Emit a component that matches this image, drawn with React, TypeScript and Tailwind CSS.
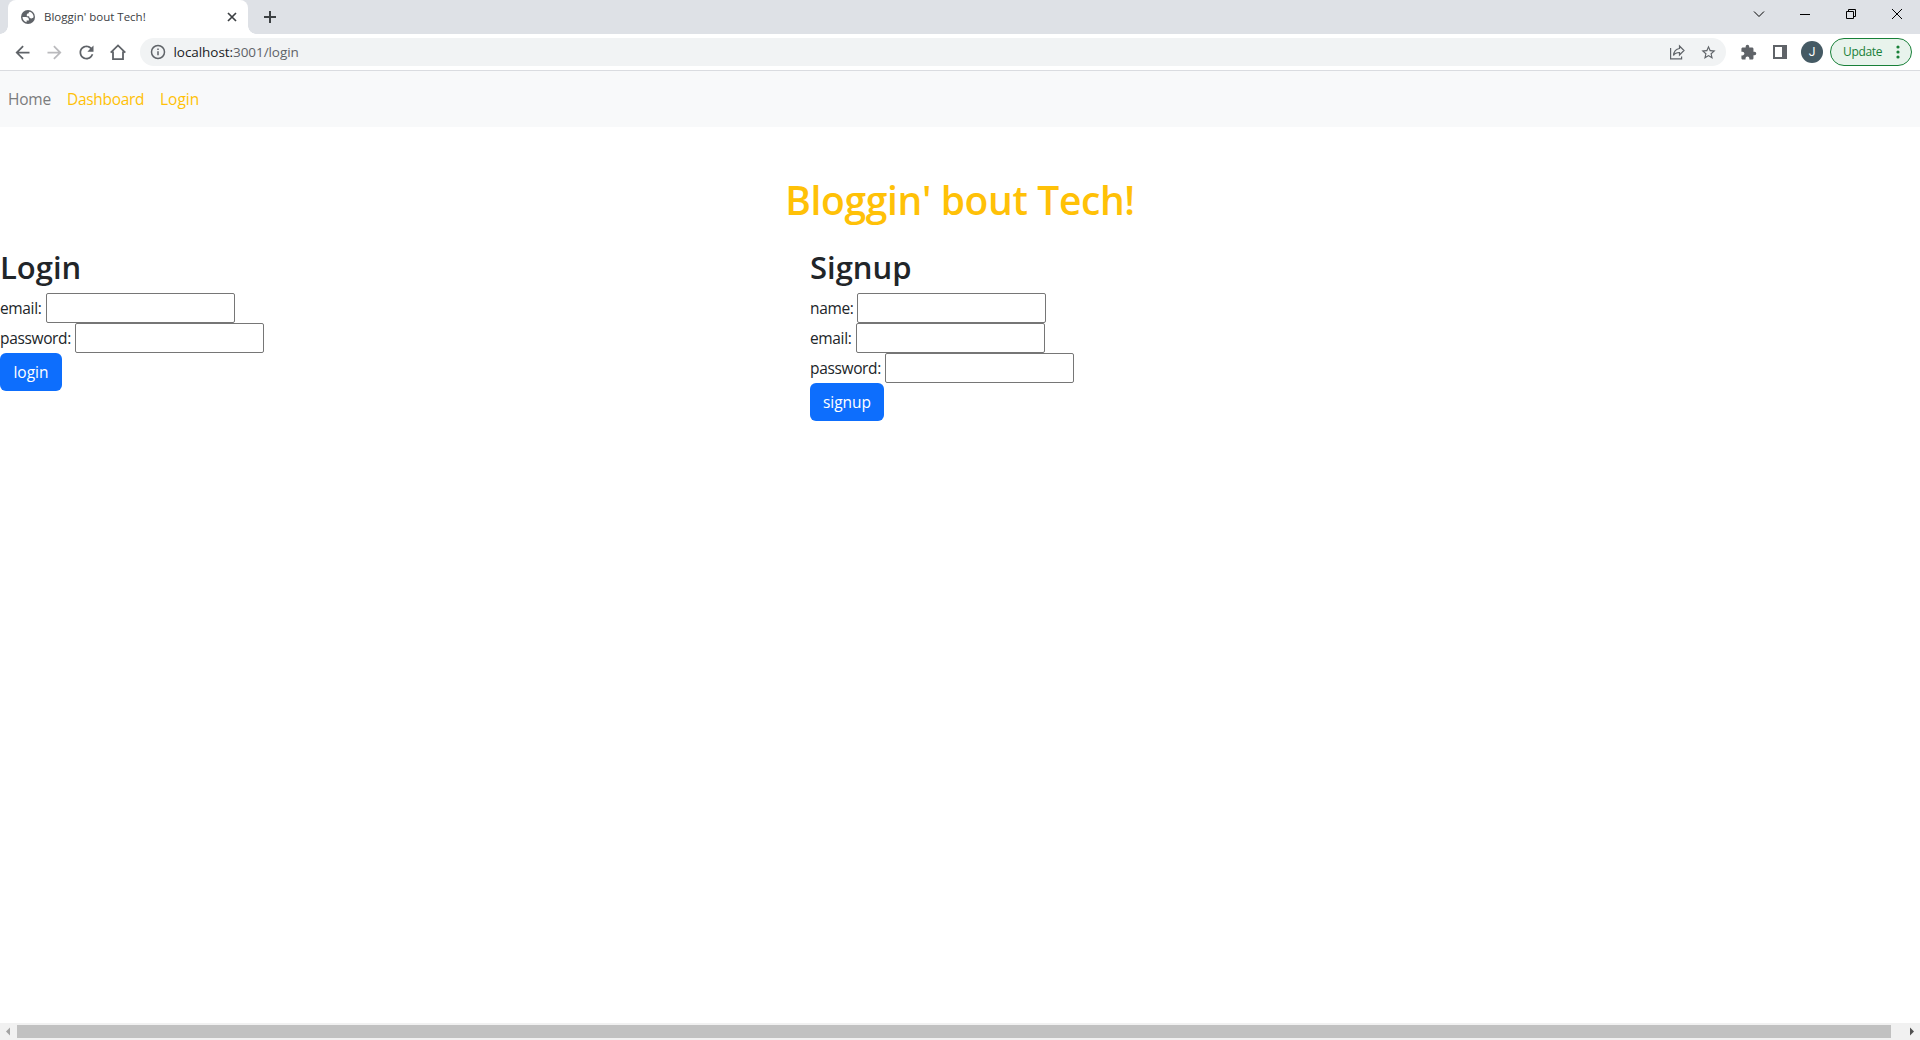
import React from "react";

const UI = "font-['Open_Sans','Noto_Sans',sans-serif]";

function Material({ d, className }: { d: string; className: string }) {
  return (
    <svg viewBox="0 0 24 24" fill="currentColor" className={`shrink-0 ${className}`}>
      <path d={d} />
    </svg>
  );
}

function Globe() {
  return (
    <svg viewBox="0 0 14 14" className="ml-[13px] size-[14px] shrink-0">
      <circle cx="7" cy="7" r="7" fill="#5f6368" />
      <path
        d="M1.500 7h3.300c2.300 0 3.400 1.100 3.100 3.500H5.600v1.700C3.100 11.600 1.500 9.500 1.500 7zM8.800 1.700c2.300.800 3.800 2.900 3.800 5.300-.500 1-1.400 1.400-2.300 1.400-1.400 0-2.200-.700-2.200-2.100H5.800V4.600c0-.800.600-1.200 1.700-1.200 0-.800.500-1.400 1.300-1.700z"
        fill="#fff"
      />
    </svg>
  );
}

function TabStrip() {
  return (
    <div className="flex h-[34px] bg-[#dee1e6]">
      <div className="relative ml-2 flex w-[240px] items-center rounded-t-lg bg-white">
        <span className="absolute -left-2 bottom-0 size-2 bg-[radial-gradient(circle_at_0_0,#dee1e6_7.5px,#fff_8px)]" />
        <span className="absolute -right-2 bottom-0 size-2 bg-[radial-gradient(circle_at_100%_0,#dee1e6_7.5px,#fff_8px)]" />
        <Globe />
        <span className="ml-[9px] w-[110px] whitespace-nowrap text-[11.500px] leading-4 text-[#3c4043]">
          Bloggin' bout Tech!
        </span>
        <svg viewBox="0 0 10 10" className="ml-[73px] size-[10px] text-[#3c4043]" fill="none" stroke="currentColor" strokeWidth="1.7">
          <path d="M1 1l8 8M9 1L1 9" />
        </svg>
      </div>
      <svg viewBox="0 0 12 12" className="ml-4 mt-[11px] size-3 text-[#3c4043]" fill="none" stroke="currentColor" strokeWidth="2">
        <path d="M6 0v12M0 6h12" />
      </svg>
      <div className="ml-auto mt-[7px] flex h-[14px] items-center gap-[32px] pr-4 text-black">
        <svg viewBox="0 0 14 14" className="size-[14px]" fill="none" stroke="currentColor" strokeWidth="1">
          <path d="M2 4.500L7 9.500l5-5" />
        </svg>
        <svg viewBox="0 0 14 14" className="size-[14px]" fill="none" stroke="currentColor" strokeWidth="1">
          <path d="M2 7.500h10" />
        </svg>
        <svg viewBox="0 0 14 14" className="size-[14px]" fill="none" stroke="currentColor" strokeWidth="1">
          <path d="M2.500 4.500h7v7h-7zM4.500 4V2.500h7v7H10" />
        </svg>
        <svg viewBox="0 0 14 14" className="size-[14px]" fill="none" stroke="currentColor" strokeWidth="1">
          <path d="M2 2l10 10M12 2L2 12" />
        </svg>
      </div>
    </div>
  );
}

function Toolbar() {
  return (
    <div className="flex h-[37px] items-center border-b border-[#dadce0] bg-white pl-[11.500px] pr-2 text-[#5f6368]">
      <Material className="size-[21px]" d="M20 11H7.830l5.590-5.590L12 4l-8 8 8 8 1.410-1.410L7.830 13H20v-2z" />
      <Material className="ml-[11px] size-[21px] text-[#bababd]" d="M12 4l-1.410 1.410L16.170 11H4v2h12.170l-5.580 5.590L12 20l8-8z" />
      <Material
        className="ml-[11px] size-[21px]"
        d="M17.650 6.350C16.200 4.900 14.210 4 12 4c-4.420 0-7.990 3.580-7.990 8s3.570 8 7.990 8c3.730 0 6.840-2.550 7.730-6h-2.080c-.820 2.330-3.040 4-5.650 4-3.310 0-6-2.690-6-6s2.690-6 6-6c1.660 0 3.140.690 4.220 1.780L13 11h7V4l-2.350 2.350z"
      />
      <svg viewBox="0 0 16 16" className="ml-[13.500px] size-4 shrink-0" fill="none" stroke="currentColor" strokeWidth="1.800">
        <path d="M.700 8.700L8 1.400l7.300 7.300M3 7.500v7.600h10V7.500" />
      </svg>
      <div className="ml-[13.500px] flex h-7 flex-1 items-center rounded-full bg-[#f1f3f4] pl-[10px] pr-[9px]">
        <svg viewBox="0 0 16 16" className="size-4" fill="none" stroke="currentColor" strokeWidth="1.500">
          <circle cx="8" cy="8" r="6.500" />
          <path d="M8 7.200v4M8 4.500v1.500" />
        </svg>
        <span className="ml-2 whitespace-nowrap text-[13.500px] leading-5 tracking-[-0.060px] text-[#202124]">
          localhost:<span className="text-[#5f6368]">3001/login</span>
        </span>
        <svg viewBox="0 0 16 16" className="ml-auto size-4" fill="none" stroke="currentColor" strokeWidth="1.200">
          <path d="M1.600 4v10.900h11v-2.400M10.500 2l4.500 4.500-4.500 4.500V8.500C7.500 8.500 5.700 9.400 4.500 11.500 4.800 8 6.800 5 10.500 4.500z" />
        </svg>
        <Material
          className="ml-[15px] size-[17px]"
          d="M22 9.240l-7.190-.620L12 2 9.190 8.630 2 9.240l5.460 4.730L5.820 21 12 17.270 18.180 21l-1.630-7.030L22 9.240zM12 15.400l-3.760 2.270 1-4.280-3.320-2.880 4.380-.380L12 6.100l1.710 4.040 4.380.380-3.320 2.880 1 4.280L12 15.400z"
        />
      </div>
      <Material
        className="ml-[14px] size-[17px]"
        d="M20.500 11H19V7c0-1.100-.900-2-2-2h-4V3.500a2.500 2.500 0 0 0-5 0V5H4c-1.100 0-1.990.900-1.990 2v3.800H3.500c1.490 0 2.700 1.210 2.700 2.700s-1.210 2.700-2.700 2.700H2V20c0 1.100.900 2 2 2h3.800v-1.500c0-1.490 1.210-2.700 2.700-2.700s2.700 1.210 2.700 2.700V22H17c1.100 0 2-.900 2-2v-4h1.500a2.500 2.500 0 0 0 0-5z"
      />
      <svg viewBox="0 0 14 14" className="ml-[16px] size-[14px] shrink-0" fill="currentColor" fillRule="evenodd">
        <path d="M0 0h14v14H0zM2 2v10h7V2z" />
      </svg>
      <div className="ml-[14px] flex size-[22px] shrink-0 items-center justify-center rounded-full bg-[#455a64] font-['Roboto',sans-serif] text-[12px] leading-none text-white">J</div>
      <div className="ml-[7px] flex h-7 w-[82px] shrink-0 items-center rounded-full border border-[#188038] bg-[#e8f3ec] pl-3 text-[#188038]">
        <span className="w-[40px] whitespace-nowrap text-[12px] leading-4 tracking-[-0.350px]">Update</span>
        <svg viewBox="0 0 4 14" className="ml-[13px] h-[14px] w-1" fill="currentColor">
          <circle cx="2" cy="2" r="1.600" />
          <circle cx="2" cy="7" r="1.600" />
          <circle cx="2" cy="12" r="1.600" />
        </svg>
      </div>
    </div>
  );
}

function Field({ label, labelClass, type }: { label: string; labelClass: string; type: string }) {
  return (
    <label className="flex h-[30px] items-center">
      <span className={`whitespace-nowrap text-[15.500px] leading-6 tracking-[-0.350px] ${labelClass}`}>{label}</span>
      <input type={type} className="h-[30px] w-[189px] rounded-[2px] border border-[#767676] bg-white" />
    </label>
  );
}

const heading = "mb-[7px] h-[38px] text-[31px] font-semibold leading-[38px]";
const button = "block h-[38px] rounded-md bg-[#0d6efd] text-center text-[15.500px] leading-[37px] text-white";

function ScrollBar() {
  return (
    <div className="flex h-[17px] items-center bg-[#f1f1f1]">
      <svg viewBox="0 0 17 17" className="size-[17px]" fill="#a3a3a3">
        <path d="M6 8.500l4-4v8z" />
      </svg>
      <div className="h-[13px] w-[1874px] bg-[#c1c1c1]" />
      <svg viewBox="0 0 17 17" className="ml-auto size-[17px]" fill="#505050">
        <path d="M11 8.500l-4-4v8z" />
      </svg>
    </div>
  );
}

export default function App() {
  return (
    <div className={`flex h-[1040px] w-[1920px] flex-col overflow-hidden bg-white text-[#212529] ${UI}`}>
      <TabStrip />
      <Toolbar />
      <nav className="flex h-14 shrink-0 items-center bg-[#f8f9fa] pb-px pl-2 text-[15.500px] leading-6 text-[#ffc107]">
        <a className="w-[59px] tracking-[-0.200px] text-[#7b7c7d]">Home</a>
        <a className="w-[93px] tracking-[-0.300px]">Dashboard</a>
        <a>Login</a>
      </nav>
      <main className="flex-1">
        <h1 className="pt-[49px] text-center text-[39px] font-semibold leading-[48px] tracking-[-0.380px] text-[#ffc107]">
          Bloggin' bout Tech!
        </h1>
        <div className="mt-[24px] flex">
          <form className="w-[810px]">
            <h2 className={heading}>Login</h2>
            <Field label="email:" labelClass="w-[46px]" type="email" />
            <Field label="password:" labelClass="w-[75px]" type="password" />
            <button type="button" className={`${button} w-[62px]`}>login</button>
          </form>
          <form>
            <h2 className={heading}>Signup</h2>
            <Field label="name:" labelClass="w-[47px]" type="text" />
            <Field label="email:" labelClass="w-[46px]" type="email" />
            <Field label="password:" labelClass="w-[75px]" type="password" />
            <button type="button" className={`${button} w-[74px]`}>signup</button>
          </form>
        </div>
      </main>
      <ScrollBar />
    </div>
  );
}
